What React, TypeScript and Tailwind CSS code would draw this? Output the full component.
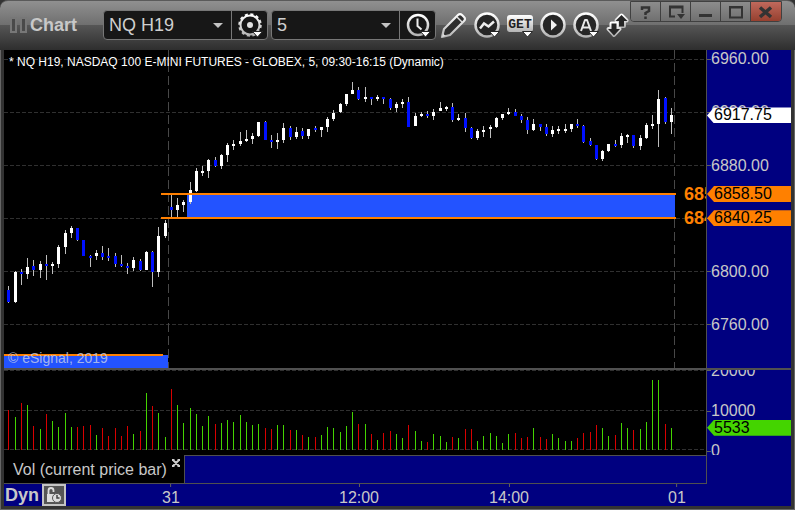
import { ReactNode } from "react";
import clsx from "clsx";

type Candle = [number, number, number, number, "w" | "b"];

// high, body top, body bottom, low, direction
const candles: Candle[] = [
  [286, 290, 302, 303, "b"], [271, 272, 302, 303, "w"], [269, 272, 274, 285, "b"], [258, 267, 274, 279, "w"],
  [260, 266, 270, 276, "b"], [261, 264, 270, 278, "w"], [255, 264, 266, 280, "b"], [262, 264, 266, 274, "w"],
  [245, 247, 264, 268, "w"], [230, 233, 247, 254, "w"], [226, 228, 233, 238, "w"], [228, 228, 240, 241, "b"],
  [240, 240, 256, 256, "b"], [255, 256, 258, 267, "b"], [250, 253, 256, 260, "w"], [246, 253, 257, 260, "b"],
  [248, 256, 258, 261, "b"], [253, 256, 264, 267, "b"], [255, 264, 266, 267, "b"], [263, 266, 268, 274, "b"],
  [257, 260, 268, 271, "w"], [259, 261, 270, 271, "b"], [251, 252, 270, 270, "w"], [251, 252, 272, 287, "b"],
  [227, 236, 272, 277, "w"], [220, 223, 236, 238, "w"], [194, 207, 210, 217, "b"], [198, 205, 210, 218, "w"],
  [200, 202, 205, 212, "w"], [182, 190, 202, 204, "w"], [168, 171, 191, 192, "w"], [166, 171, 173, 176, "w"],
  [159, 160, 171, 178, "w"], [157, 160, 166, 167, "b"], [154, 155, 166, 169, "w"], [143, 145, 155, 162, "w"],
  [140, 144, 146, 150, "w"], [132, 141, 144, 146, "w"], [130, 139, 141, 142, "w"], [133, 136, 139, 144, "w"],
  [122, 122, 136, 137, "w"], [121, 122, 140, 140, "b"], [135, 140, 142, 148, "b"], [133, 140, 142, 149, "w"],
  [123, 128, 140, 143, "w"], [126, 128, 137, 140, "b"], [127, 132, 137, 139, "w"], [128, 131, 136, 139, "b"],
  [129, 129, 136, 139, "w"], [126, 128, 130, 132, "b"], [127, 127, 130, 137, "w"], [117, 119, 127, 132, "w"],
  [110, 113, 119, 121, "w"], [103, 104, 112, 113, "w"], [94, 94, 104, 106, "w"], [82, 90, 94, 94, "w"],
  [87, 90, 99, 100, "b"], [87, 97, 99, 102, "w"], [97, 97, 99, 105, "b"], [95, 97, 99, 101, "w"],
  [97, 97, 99, 104, "b"], [98, 99, 108, 110, "b"], [102, 104, 108, 112, "w"], [99, 102, 104, 108, "w"],
  [97, 102, 127, 127, "b"], [113, 116, 126, 126, "w"], [112, 114, 116, 117, "w"], [111, 114, 116, 118, "b"],
  [109, 112, 116, 120, "w"], [102, 108, 111, 111, "w"], [106, 107, 109, 111, "w"], [103, 107, 120, 122, "b"],
  [114, 118, 120, 121, "w"], [113, 118, 128, 132, "b"], [127, 128, 138, 139, "b"], [129, 131, 138, 140, "w"],
  [126, 130, 132, 137, "w"], [125, 127, 129, 138, "w"], [117, 118, 127, 128, "w"], [114, 114, 118, 120, "w"],
  [108, 112, 114, 115, "w"], [109, 112, 116, 116, "b"], [114, 116, 120, 123, "b"], [117, 120, 130, 134, "b"],
  [119, 124, 130, 131, "w"], [124, 124, 127, 131, "b"], [124, 127, 134, 136, "b"], [126, 130, 134, 137, "w"],
  [126, 129, 131, 134, "w"], [124, 129, 131, 133, "w"], [124, 124, 129, 132, "w"], [119, 124, 126, 128, "b"],
  [125, 126, 142, 143, "b"], [138, 141, 145, 146, "b"], [145, 145, 159, 160, "b"], [150, 151, 159, 161, "w"],
  [144, 144, 151, 152, "w"], [140, 144, 146, 147, "b"], [133, 136, 145, 148, "w"], [134, 135, 137, 143, "w"],
  [135, 135, 146, 148, "b"], [135, 138, 146, 150, "w"], [123, 125, 138, 139, "w"], [115, 124, 126, 129, "w"],
  [90, 99, 124, 147, "w"], [97, 98, 122, 124, "b"], [108, 115, 122, 134, "w"],
];

// bar heights, negative = down bar
const volumes = [
  -40, 33, -47, 45, -24, 21, -36, 29, 23, 37, 23, -23, -24, -25, 15, -22, -14, -22, -14, -24, 16, -19, 57, -44, 37, 13,
  -61, 45, 27, 42, 36, 24, 34, -26, 27, 30, 28, 35, 28, 25, 26, -22, -21, 25, 25, -20, 20, -15, 13, -13, 15, 23, 22, 18,
  24, 38, -26, 26, -16, 10, -17, -19, 16, 12, -25, 19, 9, -8, 16, 14, 8, -13, 12, -21, -21, 9, 14, 17, 14, 7, 16, -17,
  -12, -13, 22, -13, -11, 16, 12, 9, 9, -12, -17, -18, -25, 22, 14, -15, 27, 22, -20, 21, 28, 70, 70, -26, 22,
];

const barX = (i: number) => Math.floor(8.75 + 6.25 * i);

// share of the price panel's height, 6960 sits 9 units from the top
const priceTop = (price: number) => `${((9.5 + (6960 - price) * 1.325) / 318) * 100}%`;

const prices = [6960, 6920, 6880, 6840, 6800, 6760];
const tags = [
  { price: 6917.75, className: "bg-white" },
  { price: 6858.5, className: "bg-[#ff8000]" },
  { price: 6840.25, className: "bg-[#ff8000]" },
];
const times = [
  { label: "31", x: 171 },
  { label: "12:00", x: 359 },
  { label: "14:00", x: 509 },
  { label: "01", x: 677 },
];

const Metal = ({ id }: { id: string }) => (
  <defs>
    <linearGradient id={id} x1="0" y1="0" x2="0" y2="1">
      <stop offset="0" stopColor="#ffffff" />
      <stop offset="1" stopColor="#b4b4b4" />
    </linearGradient>
  </defs>
);

const Caret = () => <path d="M16.500 20.500h10l-5 5.500z" fill="#fff" stroke="#262626" strokeWidth="1" />;

const GearIcon = () => (
  <svg width="28" height="28" viewBox="0 0 28 28" fill="none">
    <Metal id="gear" />
    <circle cx="14" cy="14" r="9.500" stroke="url(#gear)" strokeWidth="2" />
    <circle cx="14" cy="14" r="10.500" stroke="url(#gear)" strokeWidth="2.500" strokeDasharray="3 2.500" />
    <circle cx="14" cy="14" r="3" fill="#e2e2e2" />
    <Caret />
  </svg>
);

const ClockIcon = () => (
  <svg width="28" height="28" viewBox="0 0 28 28" fill="none">
    <Metal id="clock" />
    <circle cx="14" cy="14" r="10" stroke="url(#clock)" strokeWidth="2.500" />
    <path d="M13.500 7.500V15l4 3.500" stroke="#eee" strokeWidth="2" />
    <Caret />
  </svg>
);

const PencilIcon = () => (
  <svg width="28" height="28" viewBox="0 0 28 28" fill="none">
    <Metal id="pencil" />
    <path d="M2 26l2-8L18 4q2-2 4 0l2 2q2 2 0 4L10 24z" fill="#2e2e2e" stroke="url(#pencil)" strokeWidth="2.200" strokeLinejoin="round" />
    <path d="M17 6l5 5" stroke="#ddd" strokeWidth="1.500" />
    <path d="M2 26l1-3.500 2.500 2.500z" fill="#ddd" />
  </svg>
);

const TrendIcon = () => (
  <svg width="28" height="28" viewBox="0 0 28 28" fill="none">
    <Metal id="trend" />
    <circle cx="14" cy="14" r="11.500" fill="#262626" stroke="url(#trend)" strokeWidth="2.500" />
    <path d="M7 17.500l4-5 4.500 3 5.500-5" stroke="#eee" strokeWidth="2.500" />
    <Caret />
  </svg>
);

const GetIcon = () => (
  <svg width="28" height="28" viewBox="0 0 28 28" fill="none">
    <Metal id="get" />
    <rect x="1" y="4" width="26" height="17" rx="3" fill="url(#get)" />
    <text x="14" y="17" textAnchor="middle" fontSize="13" fontWeight="700" fill="#222" fontFamily="'Liberation Mono', monospace">
      GET
    </text>
    <Caret />
  </svg>
);

const PlayIcon = () => (
  <svg width="28" height="28" viewBox="0 0 28 28" fill="none">
    <Metal id="play" />
    <circle cx="14" cy="14" r="11.500" fill="#262626" stroke="url(#play)" strokeWidth="2.500" />
    <path d="M12 8.500v11l6-5.500z" fill="#f0f0f0" />
  </svg>
);

const AlertIcon = () => (
  <svg width="28" height="28" viewBox="0 0 28 28" fill="none">
    <Metal id="alert" />
    <circle cx="14" cy="14" r="11.500" fill="#262626" stroke="url(#alert)" strokeWidth="2.500" />
    <path d="M9 20l4-11h2l4 11M10.500 16.500h7" stroke="#e8e8e8" strokeWidth="2" strokeLinejoin="round" />
    <Caret />
  </svg>
);

const SwapIcon = () => (
  <svg width="24" height="28" viewBox="0 0 24 28" fill="none">
    <Metal id="swap" />
    <g stroke="url(#swap)" strokeWidth="4" strokeLinejoin="round">
      <path d="M16.500 4.500l5 5h-2.500v5.500h-5v-5.500h-2.500z" />
      <path d="M9 24l-5.500-6h3v-5.500h5v5.500h3z" />
    </g>
    <path d="M16.500 4l6 6h-3.500v5.500h-5v-5.500h-3.500z" fill="#262626" />
    <path d="M9 24.500l-6-6.500h3.500v-5.500h5v5.500h3.500z" fill="#262626" />
  </svg>
);

type PickerProps = {
  label: string;
  value: string;
  action: string;
  icon: ReactNode;
  className: string;
};

const Picker = ({ label, value, action, icon, className }: PickerProps) => (
  <div className="box-content flex h-7 rounded border border-[#777] bg-[#171717]">
    <div className={clsx("relative flex items-center", className)}>
      <select aria-label={label} defaultValue={value} className="h-full w-full appearance-none bg-transparent pl-[5px] text-lg leading-7 text-[#cfcfcf] outline-none">
        <option>{value}</option>
      </select>
      <span className="pointer-events-none absolute right-2 border-x-[5px] border-t-[5px] border-x-transparent border-t-[#c4c4c4]" />
    </div>
    <button aria-label={action} className="flex w-9 items-center justify-center border-l border-[#777]">
      {icon}
    </button>
  </div>
);

const ToolButton = ({ label, children }: { label: string; children: ReactNode }) => (
  <button aria-label={label} className="shrink-0">
    {children}
  </button>
);

const windowButtons = [
  { label: "Help", icon: <path d="M11 8V5.500h7V9l-3.500 2v2M14.500 14.500v2.500" stroke="#333" strokeWidth="2.500" /> },
  {
    label: "Window menu",
    icon: (
      <>
        <path d="M14 14.500H9v-10h12.500V11M8 5.500h14.500" stroke="#333" strokeWidth="2" />
        <path d="M16 12h8l-4 5z" fill="#333" />
      </>
    ),
  },
  { label: "Minimize", icon: <path d="M8 13.500h13" stroke="#333" strokeWidth="3" /> },
  { label: "Maximize", icon: <path d="M9 5h12v10.500H9zM8 5.500h14" stroke="#333" strokeWidth="2" /> },
  { label: "Close", icon: <path d="M9 5.500l11 9.500M20 5.500l-11 9.500" stroke="#333" strokeWidth="3.500" /> },
];

const Header = () => (
  <header className="flex h-[50px] shrink-0 items-start rounded-t-lg border-t border-[#5a5a5a] bg-linear-[180deg,#909090_0%,#6e6e6e_50%,#555_50%,#2e2e2e_100%]">
    <div className="flex min-w-0 flex-1 items-center pt-[9px]">
      <div className="flex w-[103px] shrink-0 items-center gap-[3px] pl-[10px]">
        <span className="h-4 w-[7px] shrink-0 border-2 border-[#777] bg-[#4a4a4a]" />
        <span className="h-4 w-[7px] shrink-0 border-2 border-[#777] bg-[#4a4a4a]" />
        <h1 className="text-lg leading-7 font-bold text-[#c8c8c8]">Chart</h1>
      </div>
      <div className="flex shrink-0 gap-[3px]">
        <Picker label="Symbol" value="NQ H19" action="Symbol settings" icon={<GearIcon />} className="w-[127px]" />
        <Picker label="Interval" value="5" action="Time template" icon={<ClockIcon />} className="w-[127px]" />
      </div>
      <div className="ml-1 flex items-center gap-[5px]">
        <ToolButton label="Draw"><PencilIcon /></ToolButton>
        <ToolButton label="Studies"><TrendIcon /></ToolButton>
        <ToolButton label="Advanced GET"><GetIcon /></ToolButton>
        <ToolButton label="Play"><PlayIcon /></ToolButton>
        <ToolButton label="Alerts"><AlertIcon /></ToolButton>
        <ToolButton label="Swap"><SwapIcon /></ToolButton>
      </div>
    </div>
    <div className="mr-[13px] flex h-[21px] shrink-0 overflow-hidden rounded-b border border-[#404040]">
      {windowButtons.map(({ label, icon }) => (
        <button
          key={label}
          aria-label={label}
          className={clsx(
            "w-[30px] border-r border-[#404040] last:border-r-0",
            label === "Close" ? "bg-linear-to-b from-[#c0695c] to-[#96402f]" : "bg-linear-to-b from-[#8c8c8c] to-[#707070]"
          )}
        >
          <svg width="29" height="20" viewBox="0 0 29 20" fill="none">
            {icon}
          </svg>
        </button>
      ))}
    </div>
  </header>
);

const PricePanel = () => (
  <section className="relative min-h-0 overflow-hidden bg-black">
    <svg className="absolute inset-0 h-full w-full" viewBox="4 50 702 318" preserveAspectRatio="none" shapeRendering="crispEdges">
      {[59, 112, 165, 218, 271, 324].map((y) => (
        <path key={y} d={`M4 ${y}.5H706`} stroke="#303030" strokeDasharray="4 2" />
      ))}
      {[168, 674].map((x) => (
        <path key={x} d={`M${x}.5 50V368`} stroke="#484848" strokeDasharray="9 4" />
      ))}
      <rect x="187" y="194" width="488" height="24" fill="#2353ff" />
      <rect x="4" y="355" width="164" height="13" fill="#2353ff" />
      {candles.map(([high, top, bottom, low, side], i) => (
        <g key={i}>
          <rect x={barX(i)} y={high} width="1" height={low - high} fill="#bdbdbd" />
          <rect x={barX(i) - 1} y={top} width="3" height={bottom - top} fill={side === "w" ? "#fff" : "#0010ff"} />
        </g>
      ))}
      <path d="M161 194H676M161 218H676M4 355H163" stroke="#ff8000" strokeWidth="2" />
    </svg>
    <p className="absolute top-1 left-[5px] text-xs leading-4 whitespace-nowrap text-white">* NQ H19, NASDAQ 100 E-MINI FUTURES - GLOBEX, 5, 09:30-16:15 (Dynamic)</p>
    <p className="absolute bottom-0 left-1 text-sm leading-5 text-[#c8d0e8]/80">© eSignal, 2019</p>
    {tags.slice(1).map(({ price }) => (
      <span key={price} className="absolute right-0 w-[22px] -translate-y-1/2 overflow-hidden text-lg leading-5 font-bold text-[#ff8000]" style={{ top: priceTop(price) }}>
        {price.toFixed(2)}
      </span>
    ))}
  </section>
);

const PriceAxis = () => (
  <aside className="relative overflow-hidden border-l border-[#505050] bg-[#000080] leading-4">
    {prices.map((price) => (
      <div key={price} className="absolute left-0 flex -translate-y-1/2 items-center" style={{ top: priceTop(price) }}>
        <span className="h-px w-1 bg-[#606060]" />
        {price.toFixed(2)}
      </div>
    ))}
    {tags.map(({ price, className }) => (
      <div
        key={price}
        className={clsx("absolute left-0 w-full -translate-y-1/2 pl-[7px] text-black [clip-path:polygon(0_50%,7px_0,100%_0,100%_100%,7px_100%)]", className)}
        style={{ top: priceTop(price) }}
      >
        {price.toFixed(2)}
      </div>
    ))}
  </aside>
);

const VolumePanel = () => (
  <section className="relative overflow-hidden bg-black">
    <svg className="absolute inset-0 h-full w-full" viewBox="4 370 702 85" preserveAspectRatio="none" shapeRendering="crispEdges">
      <path d="M4 370.500H706M4 410.500H706M4 449.500H706" stroke="#303030" strokeDasharray="4 2" />
      {volumes.map((v, i) => (
        <rect key={i} x={barX(i)} y={450 - Math.abs(v)} width="1" height={Math.abs(v)} fill={v < 0 ? "#d80000" : "#44d400"} />
      ))}
    </svg>
  </section>
);

const VolumeAxis = () => (
  <aside className="relative overflow-hidden border-l border-[#505050] bg-[#000080] leading-4">
    {[20000, 10000, 0].map((value) => (
      <div key={value} className="absolute left-0 flex -translate-y-1/2 items-center" style={{ top: `${((81 - value / 250) / 85) * 100}%` }}>
        <span className="h-px w-1 bg-[#606060]" />
        {value}
      </div>
    ))}
    <div
      className="absolute left-0 w-full -translate-y-1/2 bg-[#44d400] pl-[7px] text-black [clip-path:polygon(0_50%,7px_0,100%_0,100%_100%,7px_100%)]"
      style={{ top: `${((80 - 5533 / 250) / 85) * 100}%` }}
    >
      5533
    </div>
  </aside>
);

const TimeAxis = () => (
  <footer className="relative col-span-2 flex items-center bg-[#000080]">
    <span className="pl-px text-lg leading-5 font-bold">Dyn</span>
    <button aria-label="Lock time template" className="ml-[3px] flex h-[22px] w-6 items-center justify-center border-2 border-[#c4c4c4] bg-[#555]">
      <svg width="18" height="18" viewBox="0 0 18 18" fill="none">
        <path d="M3.500 8V4.500a2.500 2.500 0 0 1 5 0V6" stroke="#ddd" strokeWidth="1.800" />
        <path d="M2 8h9v8H2z" fill="#ddd" />
        <circle cx="12" cy="12" r="4.500" fill="#ddd" stroke="#555" />
        <path d="M12 9v3h2.500" stroke="#444" strokeWidth="1.500" />
      </svg>
    </button>
    {times.map(({ label, x }) => (
      <div key={label} className="absolute top-0 flex -translate-x-1/2 flex-col items-center gap-px leading-5" style={{ left: `${((x - 4) / 787) * 100}%` }}>
        <span className="h-[3px] w-px bg-[#606060]" />
        {label}
      </div>
    ))}
  </footer>
);

const App = () => {
  return (
    <div className="flex h-screen flex-col overflow-hidden bg-[#333] font-['Liberation_Sans',Arial,sans-serif] text-base text-[#c8c8c8]">
      <Header />
      <main className="grid min-h-0 flex-1 grid-cols-[minmax(0,1fr)_85px] grid-rows-[minmax(0,1fr)_2px_85px_29px_22px] border-x border-b border-[#666] px-[3px] pb-[3px]">
        <PricePanel />
        <PriceAxis />
        <div className="col-span-2 bg-[#505050]" />
        <VolumePanel />
        <VolumeAxis />

        {/* Study tabs */}
        <div className="flex border-b border-[#505050]">
          <div className="flex w-[181px] items-start justify-between border-r border-[#505050] bg-black pr-[3px] pl-[9px]">
            <span className="pt-[5px] leading-5 whitespace-nowrap">Vol (current price bar)</span>
            <button aria-label="Close study" className="pt-1">
              <svg width="10" height="8" viewBox="0 0 10 8" fill="none">
                <path d="M2 1l6 6M8 1l-6 6M1 1h2.500M6.500 1H9M1 7h2.500M6.500 7H9" stroke="#ccc" strokeWidth="2" />
              </svg>
            </button>
          </div>
          <div className="flex-1 border-t border-[#505050] bg-[#000080]" />
        </div>
        <div className="border-l border-[#505050] bg-[#000080]" />

        <TimeAxis />
      </main>
    </div>
  );
};

export default App;
